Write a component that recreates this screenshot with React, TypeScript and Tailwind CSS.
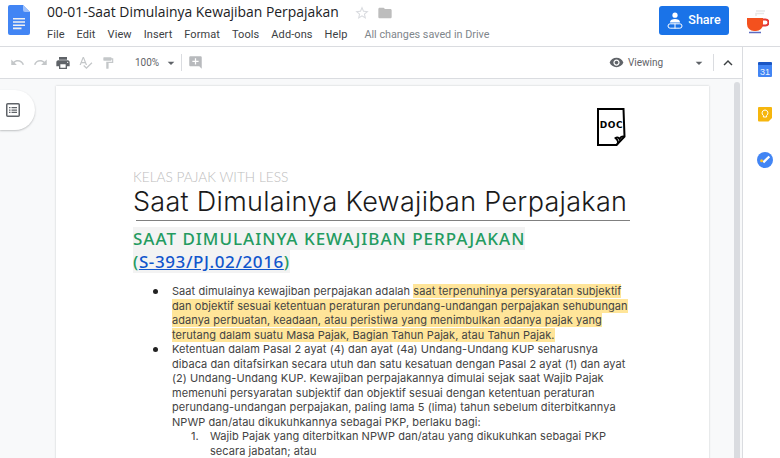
import React from 'react';
import {
  MdUndo, MdRedo, MdPrint, MdSpellcheck, MdFormatPaint, MdAddComment,
  MdRemoveRedEye, MdKeyboardArrowUp, MdStarBorder, MdFolder, MdArrowDropDown,
} from 'react-icons/md';

const menus = ['File', 'Edit', 'View', 'Insert', 'Format', 'Tools', 'Add-ons', 'Help'];

function DocsLogo() {
  return (
    <svg width="22" height="30" viewBox="0 0 22 30" className="shrink-0">
      <path d="M2 0h13l7 7v21a2 2 0 0 1-2 2H2a2 2 0 0 1-2-2V2a2 2 0 0 1 2-2z" fill="#4285f4" />
      <path d="M15 0l7 7h-5a2 2 0 0 1-2-2z" fill="#a1c2fa" />
      <path d="M5 13h12v1.6H5zM5 16.2h12v1.6H5zM5 19.4h12V21H5zM5 22.6h8.500v1.600H5z" fill="#f1f1f1" />
    </svg>
  );
}

function CoffeeCup() {
  return (
    <svg width="22" height="26" viewBox="0 0 22 26">
      <path d="M9 7V4.500h8M9 2h9" stroke="#e8e8e8" strokeWidth="1.500" fill="none" />
      <path d="M0 9h16v6a7 7 0 0 1-7 7H7a7 7 0 0 1-7-7z" fill="#f4511e" />
      <path d="M16 10.500h2.500a2.700 2.700 0 0 1 0 6H15" stroke="#e53935" strokeWidth="2" fill="none" />
      <path d="M2 23.500h12" stroke="#5c6bc0" strokeWidth="1.500" />
    </svg>
  );
}

function ShareIcon() {
  return (
    <svg width="16" height="17" viewBox="0 0 16 17" fill="white">
      <circle cx="8" cy="3.200" r="2.600" />
      <path d="M3 10c0-2 2.500-3 5-3s5 1 5 3v.6H3z" />
      <path d="M1 14a2.200 2.200 0 0 1 2.200-2.200h9.600a2.200 2.200 0 0 1 0 4.400H3.200A2.200 2.200 0 0 1 1 14z" fill="none" stroke="white" strokeWidth="1" />
      <path d="M8 11.500v5" stroke="white" strokeWidth="1" />
    </svg>
  );
}

function OutlineIcon() {
  return (
    <svg width="14" height="14" viewBox="0 0 14 14">
      <rect x="0.750" y="0.750" width="12.500" height="12.500" rx="1" fill="none" stroke="#5f6368" strokeWidth="1.500" />
      <path d="M3 4h1.500v1.300H3zM5.500 4H11v1.300H5.500zM3 6.400h1.500v1.300H3zM5.500 6.400H11v1.300H5.500zM3 8.800h1.500v1.300H3zM5.500 8.800H11v1.300H5.500z" fill="#5f6368" />
    </svg>
  );
}

function DocSticker() {
  return (
    <svg width="29" height="38" viewBox="0 0 29 38" className="ml-auto mr-[4px]">
      <path d="M1 1h25.500l1 27.500-8 8.500H1z" fill="white" stroke="black" strokeWidth="2" />
      <path d="M20 37c2-3 1-5-1.500-7 2-1.500 3.500 0 4 1 1-2 3-3 5-2.500" fill="none" stroke="black" strokeWidth="1.800" />
      <text x="14.500" y="20" textAnchor="middle" fontFamily="'DejaVu Sans', sans-serif" fontWeight="700" fontSize="9" letterSpacing="0.600" fill="black">DOC</text>
    </svg>
  );
}

function CalendarIcon() {
  return (
    <svg width="14" height="15" viewBox="0 0 14 15">
      <rect width="14" height="14" y="1" rx="1" fill="#4285f4" />
      <rect width="14" height="3" y="0" rx="1" fill="#1a56c4" />
      <text x="7" y="12.500" textAnchor="middle" fontSize="9" fontFamily="'Liberation Sans', sans-serif" fill="#e8f0fe">31</text>
    </svg>
  );
}

function KeepIcon() {
  return (
    <svg width="14" height="15" viewBox="0 0 14 15">
      <path d="M1 0h12a1 1 0 0 1 1 1v10l-3.500 3.500H1a1 1 0 0 1-1-1V1a1 1 0 0 1 1-1z" fill="#f6b60d" />
      <path d="M7 3a3 3 0 0 0-1.600 5.500V10h3.200V8.500A3 3 0 0 0 7 3z" fill="none" stroke="#fff" strokeWidth="1" />
    </svg>
  );
}

function TasksIcon() {
  return (
    <svg width="16" height="16" viewBox="0 0 16 16">
      <circle cx="8" cy="8" r="8" fill="#4285f4" />
      <path d="M6.300 10.300L12.300 4.500" stroke="white" strokeWidth="2.400" />
      <circle cx="4.600" cy="8.800" r="1.500" fill="#fbc02d" />
    </svg>
  );
}

const hl = 'bg-[#ffe599]';

export default function App() {
  return (
    <div className="w-[780px] h-[458px] overflow-hidden bg-white flex flex-col text-[#3c4043] font-['Roboto',sans-serif]">
      {/* title bar */}
      <div className="h-[47px] shrink-0 flex items-start border-b border-[#dadce0]">
        <div className="pl-[8px] pt-[5px]"><DocsLogo /></div>
        <div className="pl-[17px] pt-[2px]">
          <div className="flex items-center h-[21px]">
            <span className="text-[13.900px] text-[#202124] font-['Open_Sans',sans-serif] whitespace-nowrap">00-01-Saat Dimulainya Kewajiban Perpajakan</span>
            <MdStarBorder className="ml-[15px] text-[#dadce0]" size={16} />
            <MdFolder className="ml-[7px] text-[#bdbdbd]" size={16} />
          </div>
          <div className="flex items-center h-[20px] mt-[2px] text-[11px] text-[#3c4043] tracking-[0.08px]">
            <div className="flex gap-[12px]">
              {menus.map((m) => <span key={m}>{m}</span>)}
            </div>
            <span className="ml-[17px] text-[10.800px] text-[#80868b] whitespace-nowrap tracking-normal">All changes saved in Drive</span>
          </div>
        </div>
        <div className="ml-auto flex items-center pt-[6px] pr-[11px]">
          <button className="w-[70px] h-[29px] bg-[#1a73e8] rounded-[3px] flex items-center justify-center gap-[5px] text-white text-[12.500px] font-medium">
            <ShareIcon />
            Share
          </button>
          <div className="ml-[18px] pt-[2px]"><CoffeeCup /></div>
        </div>
      </div>

      <div className="flex flex-1 min-h-0">
        <div className="flex-1 min-w-0 flex flex-col relative">
          {/* toolbar */}
          <div className="h-[32px] shrink-0 flex items-center border-b border-[#dadce0] pl-[10px] pr-[5px] text-[#5f6368]">
            <MdUndo size={15} className="text-[#c4c7c9]" />
            <MdRedo size={15} className="ml-[8px] text-[#c4c7c9]" />
            <MdPrint size={16} className="ml-[7px]" />
            <MdSpellcheck size={15} className="ml-[7px] text-[#c4c7c9]" />
            <MdFormatPaint size={14} className="ml-[8px] text-[#c4c7c9]" />
            <span className="ml-[20px] text-[10px] w-[24px]">100%</span>
            <MdArrowDropDown size={16} className="ml-[4px]" />
            <div className="w-px h-[17px] bg-[#dadce0] ml-[2px]" />
            <MdAddComment size={15} className="ml-[6px] text-[#b8babd]" />
            <MdRemoveRedEye size={15} className="ml-auto" />
            <span className="ml-[4px] text-[10px] w-[63px]">Viewing</span>
            <MdArrowDropDown size={16} />
            <div className="w-px h-[17px] bg-[#dadce0] ml-[6px]" />
            <MdKeyboardArrowUp size={18} className="ml-[5px] text-[#3c4043]" />
          </div>

          {/* canvas */}
          <div className="flex-1 min-h-0 bg-[#f8f9fa] overflow-hidden pt-[7px] pl-[56px] flex items-start">
            <div className="w-[653px] h-[400px] shrink-0 bg-white shadow-[0_0_2px_rgba(60,64,67,0.25)] pl-[77px] pr-[79px] pt-[22px]">
              <DocSticker />
              <div className="mt-[23px] text-[13.700px] leading-[15px] text-[#bdbdbd] font-['Lato',sans-serif] font-light">KELAS PAJAK WITH LESS</div>
              <div className="mt-[2px] text-[27px] leading-[32px] tracking-[0.3px] text-[#1a1a1a] font-['Inter',sans-serif] font-light whitespace-nowrap">Saat Dimulainya Kewajiban Perpajakan</div>
              <div className="mt-[2px] ml-[3px] h-px bg-[#808080]" />
              <div className="mt-[6px] font-['Noto_Sans',sans-serif] text-[17px] leading-[23px] tracking-[1px] font-medium text-[#249b60]">
                <div><span className="bg-[#f3f3f3] whitespace-nowrap">SAAT DIMULAINYA KEWAJIBAN PERPAJAKAN</span></div>
                <div><span className="bg-[#f3f3f3] tracking-[0.6px]">(<a className="text-[#1155cc] underline">S-393/PJ.02/2016</a>)</span></div>
              </div>

              <ul className="mt-[11px] text-[11px] leading-[14.500px] tracking-[0.06px] text-[#434343] font-['Inter',sans-serif] whitespace-nowrap">
                <li className="flex">
                  <span className="w-[39px] shrink-0 flex justify-end pr-[14px] pt-[5px]"><span className="w-[5px] h-[5px] rounded-full bg-[#222222]" /></span>
                  <div>
                    Saat dimulainya kewajiban perpajakan adalah <span className={hl}>saat terpenuhinya persyaratan subjektif</span><br />
                    <span className={hl}>dan objektif sesuai ketentuan peraturan perundang-undangan perpajakan sehubungan</span><br />
                    <span className={hl}>adanya perbuatan, keadaan, atau peristiwa yang menimbulkan adanya pajak yang</span><br />
                    <span className={hl}>terutang dalam suatu Masa Pajak, Bagian Tahun Pajak, atau Tahun Pajak.</span>
                  </div>
                </li>
                <li className="flex">
                  <span className="w-[39px] shrink-0 flex justify-end pr-[14px] pt-[5px]"><span className="w-[5px] h-[5px] rounded-full bg-[#222222]" /></span>
                  <div>
                    Ketentuan dalam Pasal 2 ayat (4) dan ayat (4a) Undang-Undang KUP seharusnya<br />
                    dibaca dan ditafsirkan secara utuh dan satu kesatuan dengan Pasal 2 ayat (1) dan ayat<br />
                    (2) Undang-Undang KUP. Kewajiban perpajakannya dimulai sejak saat Wajib Pajak<br />
                    memenuhi persyaratan subjektif dan objektif sesuai dengan ketentuan peraturan<br />
                    perundang-undangan perpajakan, paling lama 5 (lima) tahun sebelum diterbitkannya<br />
                    NPWP dan/atau dikukuhkannya sebagai PKP, berlaku bagi:
                    <ol>
                      <li className="flex">
                        <span className="w-[38px] shrink-0 pl-[19px]">1.</span>
                        <div>
                          Wajib Pajak yang diterbitkan NPWP dan/atau yang dikukuhkan sebagai PKP<br />
                          secara jabatan; atau
                        </div>
                      </li>
                    </ol>
                  </div>
                </li>
              </ul>
            </div>
            {/* scrollbar */}
            <div className="ml-[25px] mt-[-4px] w-[6px] h-[400px] rounded-[3px] bg-[#dadce0] shrink-0" />
          </div>

          {/* document outline button */}
          <div className="absolute left-0 top-[43px] w-[35px] h-[40px] bg-white rounded-r-[20px] shadow-[0_1px_2px_rgba(60,64,67,0.3)] flex items-center pl-[6px]">
            <OutlineIcon />
          </div>
        </div>

        {/* side panel */}
        <div className="w-[38px] shrink-0 border-l border-[#dadce0] bg-white flex flex-col items-start pl-[15px] pt-[15px] gap-[30px]">
          <CalendarIcon />
          <KeepIcon />
          <div className="-ml-[1px]"><TasksIcon /></div>
        </div>
      </div>
    </div>
  );
}
